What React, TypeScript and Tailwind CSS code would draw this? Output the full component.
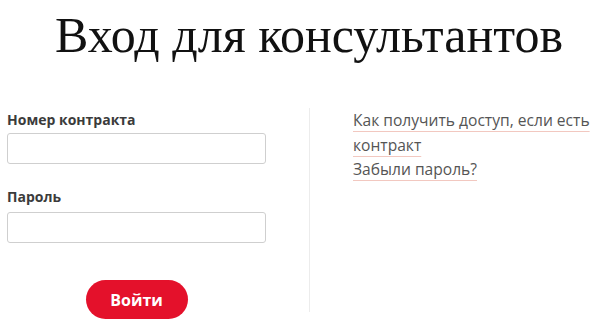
import React from "react";

export default function App() {
  return (
    <div className="w-[600px] h-[324px] bg-white overflow-hidden">
      <h1 className="pt-[10px] pl-[18px] text-center font-['Liberation_Serif',serif] text-[50px] leading-none text-[#111] font-normal">
        Вход для консультантов
      </h1>
      <div className="flex items-start mt-[48px]">
        <div className="w-[309px] pl-[7px] pt-[2px] font-['Open_Sans',sans-serif]">
          <div className="w-[259px] flex flex-col">
            <label className="text-[14px] leading-[20px] font-bold text-[#3b3b3b]">Номер контракта</label>
            <input
              type="text"
              className="mt-[3px] h-[31px] w-full rounded-[3px] border border-[#cfcfcf] bg-white"
            />
            <label className="mt-[23px] text-[14px] leading-[20px] font-bold text-[#3b3b3b]">Пароль</label>
            <input
              type="password"
              className="mt-[5px] h-[31px] w-full rounded-[3px] border border-[#cfcfcf] bg-white"
            />
            <div className="flex justify-center mt-[37px]">
              <button className="w-[102px] h-[39px] rounded-full bg-[#e4112b] text-white text-[16px] font-bold leading-none">
                Войти
              </button>
            </div>
          </div>
        </div>
        <div className="h-[204px] border-l border-[#ececec] pl-[43px] font-['Open_Sans',sans-serif] text-[15.6px] leading-[24.5px] text-[#555]">
          <div className="w-[245px]">
            <a className="block underline decoration-[#f2c8c0] underline-offset-[5px] decoration-1">
              Как получить доступ, если есть контракт
            </a>
            <a className="block underline decoration-[#f2c8c0] underline-offset-[5px] decoration-1">
              Забыли пароль?
            </a>
          </div>
        </div>
      </div>
    </div>
  );
}
